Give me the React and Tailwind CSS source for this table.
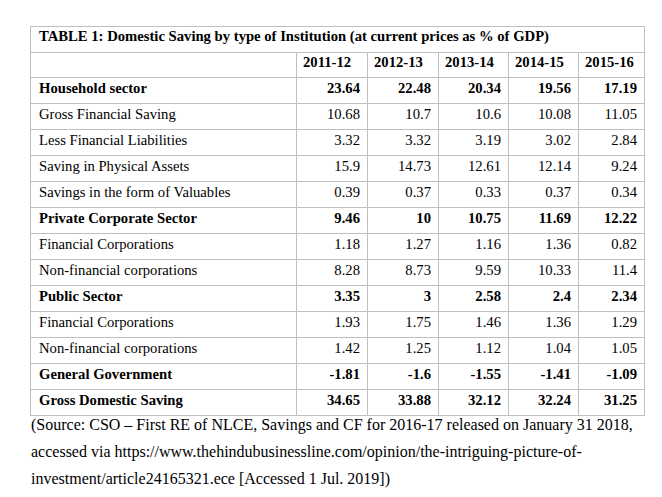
import React from "react";

const rows = [
  { label: "Household sector", vals: ["23.64", "22.48", "20.34", "19.56", "17.19"], bold: true },
  { label: "Gross Financial Saving", vals: ["10.68", "10.7", "10.6", "10.08", "11.05"] },
  { label: "Less Financial Liabilities", vals: ["3.32", "3.32", "3.19", "3.02", "2.84"] },
  { label: "Saving in Physical Assets", vals: ["15.9", "14.73", "12.61", "12.14", "9.24"] },
  { label: "Savings in the form of Valuables", vals: ["0.39", "0.37", "0.33", "0.37", "0.34"] },
  { label: "Private Corporate Sector", vals: ["9.46", "10", "10.75", "11.69", "12.22"], bold: true },
  { label: "Financial Corporations", vals: ["1.18", "1.27", "1.16", "1.36", "0.82"] },
  { label: "Non-financial corporations", vals: ["8.28", "8.73", "9.59", "10.33", "11.4"] },
  { label: "Public Sector", vals: ["3.35", "3", "2.58", "2.4", "2.34"], bold: true },
  { label: "Financial Corporations", vals: ["1.93", "1.75", "1.46", "1.36", "1.29"] },
  { label: "Non-financial corporations", vals: ["1.42", "1.25", "1.12", "1.04", "1.05"] },
  { label: "General Government", vals: ["-1.81", "-1.6", "-1.55", "-1.41", "-1.09"], bold: true },
  { label: "Gross Domestic Saving", vals: ["34.65", "33.88", "32.12", "32.24", "31.25"], bold: true },
];

const years = ["2011-12", "2012-13", "2013-14", "2014-15", "2015-16"];

export default function App() {
  return (
    <div className="w-[662px] h-[497px] bg-white text-black font-['Liberation_Serif',serif] pt-[26px] pl-[30px] overflow-hidden">
      <div className="grid grid-cols-[266px_71px_71px_70px_70px_66px] w-[615px] border-l border-t border-[#bfbfbf] text-[14.67px] leading-[17px]">
        <div className="col-span-6 h-[26px] border-r border-b border-[#bfbfbf] pl-[8px] pt-[1px] font-bold">
          TABLE 1: Domestic Saving by type of Institution (at current prices as % of GDP)
        </div>
        <div className="h-[25px] border-r border-b border-[#bfbfbf]"></div>
        {years.map((y) => (
          <div key={y} className="h-[25px] border-r border-b border-[#bfbfbf] pl-[6px] pt-[1px] font-bold">
            {y}
          </div>
        ))}
        {rows.map((r, i) => (
          <React.Fragment key={i}>
            <div className={`h-[26px] border-r border-b border-[#bfbfbf] pl-[8px] pt-[2px] ${r.bold ? "font-bold" : ""}`}>
              {r.label}
            </div>
            {r.vals.map((v, j) => (
              <div
                key={j}
                className={`h-[26px] border-r border-b border-[#bfbfbf] pr-[7px] pt-[2px] text-right ${r.bold ? "font-bold" : ""}`}
              >
                {v}
              </div>
            ))}
          </React.Fragment>
        ))}
      </div>
      <div className="w-[615px] mt-[-5px] pl-[1px] text-[16px] leading-[27px]">
        (Source: CSO – First RE of NLCE, Savings and CF for 2016-17 released on January 31 2018, accessed via https://www.thehindubusinessline.com/opinion/the-intriguing-picture-of-investment/article24165321.ece [Accessed 1 Jul. 2019])
      </div>
    </div>
  );
}
